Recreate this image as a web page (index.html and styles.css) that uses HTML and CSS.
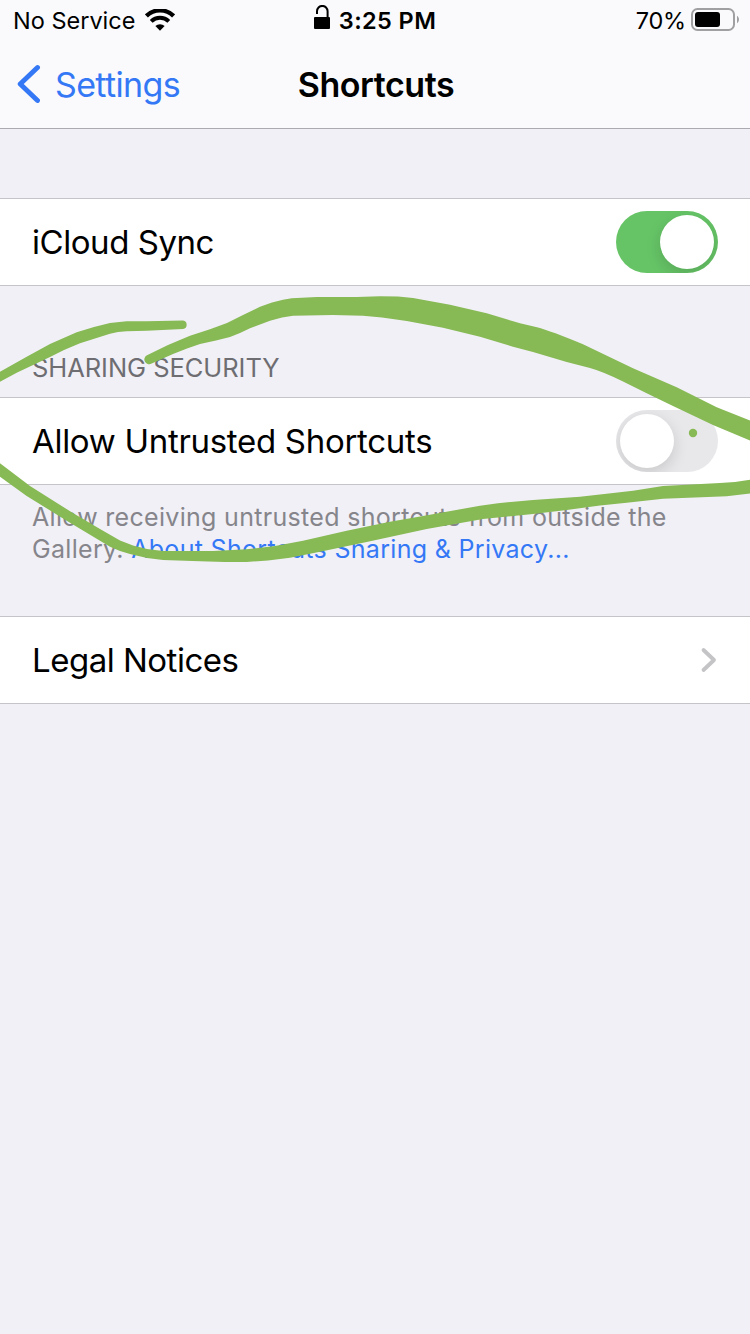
FILE: index.html
```html
<!DOCTYPE html>
<html lang="en">
<head>
<meta charset="utf-8">
<title>Shortcuts</title>
<link rel="stylesheet" href="styles.css">
</head>
<body>
<div class="screen">
  <header class="header">
    <div class="status">
      <div class="status-left">
        <span class="carrier">No Service</span>
        <svg class="wifi" width="30" height="22" viewBox="0 0 30 22"><g fill="none" stroke="#000"><path d="M1.400 7a19.200 19.200 0 0 1 27.200 0" stroke-width="4.300"/><path d="M6.200 12.400a12.600 12.600 0 0 1 17.600 0" stroke-width="4"/></g><path d="M10.400 17.100a6.600 6.600 0 0 1 9.200 0L15 21.700z"/></svg>
      </div>
      <div class="status-center">
        <svg class="lock" width="17" height="25" viewBox="0 0 17 25"><rect x="0" y="12" width="16" height="12" rx="1"/><path d="M3 9V6.200a5.300 5.300 0 0 1 10.600 0V13" fill="none" stroke="#000" stroke-width="2"/></svg>
        <span class="time">3:25 PM</span>
      </div>
      <div class="status-right">
        <span class="percent">70%</span>
        <svg class="battery" width="49" height="24" viewBox="0 0 49 24"><rect x="1" y="1" width="42" height="21" rx="5.500" fill="none" stroke="#a0a0a2" stroke-width="2"/><rect x="4" y="4" width="25" height="15" rx="3"/><path d="M46 7.800c2.700 1.800 2.700 5.600 0 7.400z" fill="#a0a0a2"/></svg>
      </div>
    </div>
    <nav class="nav">
      <a class="back"><svg width="24" height="40" viewBox="0 0 24 40"><path d="M20.500 3.500 3.200 20 20.500 36.500" fill="none" stroke="#3478f6" stroke-width="4.900" stroke-linecap="round" stroke-linejoin="round"/></svg><span class="back-label">Settings</span></a>
      <h1 class="title">Shortcuts</h1>
    </nav>
  </header>
  <main class="content">
    <section class="row">
      <span class="label label-sync">iCloud Sync</span>
      <span class="toggle toggle-on"><span class="knob"></span></span>
    </section>
    <h2 class="section-title"><span>SHARING SECURITY</span></h2>
    <section class="row">
      <span class="label label-allow">Allow Untrusted Shortcuts</span>
      <span class="toggle"><span class="knob"></span></span>
    </section>
    <p class="note">Allow receiving untrusted shortcuts from outside the<br>Gallery. <a class="link">About Shortcuts Sharing &amp; Privacy...</a></p>
    <section class="row">
      <span class="label label-legal">Legal Notices</span>
      <svg class="chevron" width="18" height="28" viewBox="0 0 18 28"><path d="M3.500 4 14 14 3.500 24" fill="none" stroke="#c4c4c7" stroke-width="3.800" stroke-linecap="round" stroke-linejoin="round"/></svg>
    </section>
  </main>
  <svg class="scribble" width="750" height="1334" viewBox="0 0 750 1334">
    <path d="M146.500 355.500L168 345 190 335.700 210 329.200 227 323 243 315 260 306.700 272 302.500 283 299.700 291.700 298.300 316.700 297 356.700 297 380 296.300 398 296.500 413 298 450 304.700 486.700 313.300 520 323.300 537 327.300Q551 331 583 344.300L633 368.300 676.700 387.300 716.700 407.300 751 421V441L713 425 673 406 646.700 393.300 622 381Q602 371.300 590 368L566.700 362 533 352 513 346.700 480 336.700 443 327.700 406.700 321 382 317.500 363 315.700 333 315 293 315.700 282 317.500 270 320.700 250 328.300 240 333 230 337 216 340.500 200 344 187 348.500 173 354 151.700 363.500A4.500 4.500 0 0 1 146.500 355.500Z"/>
    <path d="M-1 372.300L26.700 356.700 50 344 76.700 332.300 94 327 110 323 126.700 321.300 146.700 321.300 183 320.500A4.300 4.300 0 0 1 183 329L146.700 330.700 126.700 331.300 118 332 110 333.700 80 343.300 64 350 50 357 16.700 372.700-1 382.300Z"/>
    <path d="M-1 462.500L30 486 73.300 513.300 100 529 120 540.500 133 545.500 147 549 163 551 213 551 246.700 549.300 275 546 303 540.700 346.700 530.700 390 521.700 423 516 480 505.700 498 503.200 533 500 580 496.700 633 490.700 663 486 720 483 735 482 751 479.500V493.300L726.700 496.300 663 498.700 626.700 502.700 600 505.500 566.700 510 533 514 483 519 426.700 529 366.700 542 320 551.700 290 557.700 268 560.500 246.700 562 225 562 200 561.300 163 560 147 558 130 554 120 551 110 546.700 66.700 520.700 26.700 496-1 476Z"/>
    <circle cx="693" cy="433" r="4.200"/>
  </svg>
</div>
</body>
</html>
```

FILE: styles.css
```css
* { box-sizing: border-box; }
body { margin: 0; }
.screen { position: relative; width: 750px; height: 1334px; overflow: hidden; background: #f1f0f6; color: #000; font-family: Inter, "Liberation Sans", sans-serif; white-space: nowrap; }
.header { height: 129px; background: #fafafc; border-bottom: 1px solid #abaab0; }
.status { display: grid; grid-template-columns: 1fr auto 1fr; height: 40px; font-size: 23.5px; line-height: 38px; }
.status-left, .status-center, .status-right { display: flex; align-items: center; }
.status-left { padding-left: 13px; gap: 10px; }
.status-center { gap: 8px; font-weight: 600; }
.status-right { justify-content: flex-end; padding-right: 10px; gap: 5px; }
.carrier, .time, .percent { padding-top: 2px; }
.time { letter-spacing: .4px; }
.percent { letter-spacing: -.2px; }
.lock { margin-bottom: 5px; }
.nav { display: grid; grid-template-columns: 1fr auto 1fr; height: 88px; align-items: center; }
.back { display: flex; align-items: center; padding-left: 17px; gap: 14px; color: #3478f6; font-size: 34px; letter-spacing: -.65px; }
.title { margin: 0; padding-left: 2px; font-size: 34px; font-weight: 600; letter-spacing: -.45px; }
.content { padding-top: 69px; }
.row { display: flex; align-items: center; justify-content: space-between; height: 88px; padding: 0 32px; background: #fff; border-top: 1px solid #c5c4c9; border-bottom: 1px solid #c5c4c9; }
.label { font-size: 33px; }
.label-sync { letter-spacing: -.45px; }
.label-allow { letter-spacing: -.3px; }
.label-legal { letter-spacing: -.5px; }
.toggle { display: flex; width: 102px; height: 62px; padding: 4px; border-radius: 31px; background: #e8e8ea; overflow: hidden; }
.toggle-on { justify-content: flex-end; background: #66c466; }
.knob { width: 54px; height: 54px; border-radius: 50%; background: #fff; box-shadow: 0 5px 15px rgba(0,0,0,.14); }
.section-title { display: flex; align-items: flex-end; height: 111px; margin: 0; padding: 0 32px 13px; color: #6d6d72; font-size: 25.500px; font-weight: 400; line-height: 32px; letter-spacing: -.05px; }
.note { height: 131px; margin: 0; padding: 16px 32px 0; color: #85858b; font-size: 25px; line-height: 32px; letter-spacing: .31px; }
.link { color: #3478f6; }
.scribble { position: absolute; left: 0; top: 0; fill: #87b954; }
```
